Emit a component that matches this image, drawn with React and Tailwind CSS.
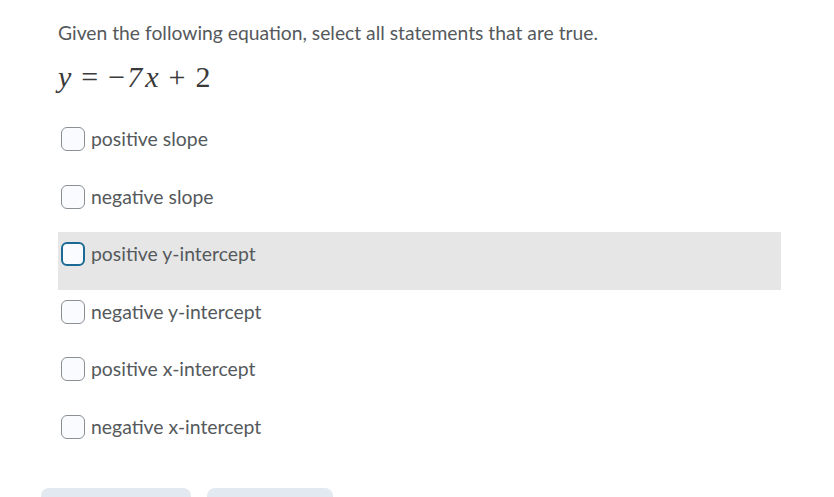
import React, { useState } from 'react';

const options = [
  'positive slope',
  'negative slope',
  'positive y-intercept',
  'negative y-intercept',
  'positive x-intercept',
  'negative x-intercept',
];

const Checkbox = ({ focused }) => (
  <span
    className={
      focused
        ? 'block w-6 h-6 shrink-0 rounded-[6px] border-2 border-[#1b6a95] bg-[#f9fbff]'
        : 'block w-6 h-6 shrink-0 rounded-[6px] border border-[#8a8f93] bg-[#f9fbff]'
    }
  />
);

const App = () => {
  const [hovered] = useState(2);

  return (
    <div className="w-[834px] h-[497px] overflow-hidden bg-white text-[#55595c] font-['Lato','Liberation_Sans',sans-serif]">
      <div className="pl-[58px] pt-[20px]">
        <p className="text-[19.3px] leading-[26px]">
          Given the following equation, select all statements that are true.
        </p>
        <div className="mt-[11px] h-[38px] flex items-center text-[30px] text-[#3a3a3a] font-['Liberation_Serif',serif]">
          <span className="italic">y</span>
          <span className="ml-[10px]">=</span>
          <span className="ml-[10px]">−</span>
          <span className="ml-[2px] italic">7</span>
          <span className="ml-[3px] italic">x</span>
          <span className="ml-[10px]">+</span>
          <span className="ml-[10px]">2</span>
        </div>
      </div>

      <div className="mt-[22px] ml-[58px] w-[723px] flex flex-col">
        {options.map((label, i) => (
          <div
            key={label}
            className={
              i === hovered
                ? 'h-[57.5px] flex items-start gap-[6px] pl-[3px] pt-[10px] bg-[#e6e6e6]'
                : 'h-[57.5px] flex items-start gap-[6px] pl-[3px] pt-[10px]'
            }
          >
            <Checkbox focused={i === hovered} />
            <span className="text-[19.4px] leading-[24px]">{label}</span>
          </div>
        ))}
      </div>

      <div className="mt-[26px] ml-[41px] flex gap-[16px]">
        <div className="w-[150px] h-[40px] rounded-[8px] bg-[#e3e9f1]" />
        <div className="w-[126px] h-[40px] rounded-[8px] bg-[#e3e9f1]" />
      </div>
    </div>
  );
};

export default App;
